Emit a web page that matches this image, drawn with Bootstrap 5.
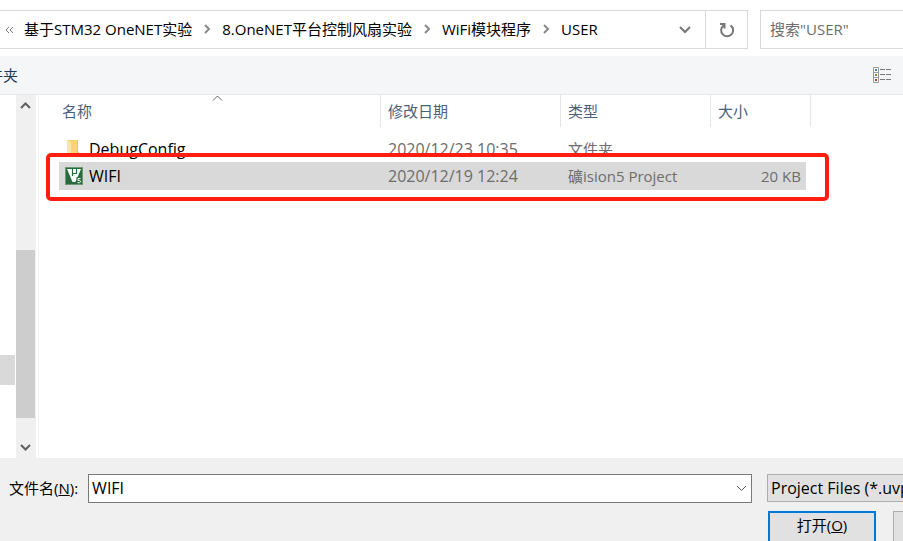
<!DOCTYPE html>
<html lang="zh-CN">
<head>
<meta charset="utf-8">
<meta name="viewport" content="width=device-width, initial-scale=1">
<title>打开</title>
<link href="https://cdn.jsdelivr.net/npm/bootstrap@5.3.0/dist/css/bootstrap.min.css" rel="stylesheet">
<style>
body{font-family:"Open Sans","Noto Sans CJK SC",sans-serif;font-size:15px;line-height:20px;color:#000;background:#fff}
button,input,select{font:inherit;color:inherit}
button{background:none;border:0;padding:0}
svg{display:block;flex:none}
.top-row{padding:10px 0 7px;gap:12px}
.address{height:39px;border:1px solid #d9d9d9;border-left:0;padding-left:5px}
.crumbs{gap:11px;padding:0 0 2px 10px}
.crumbs a{color:#000;text-decoration:none}
.drop-btn{width:40px}
.refresh-btn{width:42px;border-left:1px solid #d9d9d9}
.search-box{width:143px;height:39px;border:1px solid #d9d9d9;border-right:0;border-radius:0;padding:0 9px 2px;outline:0}
.search-box::placeholder{color:#6d6d6d}
.command-bar{height:39px;background:#f5f6f7;border-bottom:1px solid #e5e7ea;color:#1e395b;padding-right:12px}
.new-folder{margin-left:-12px}
.tree-pane{width:16px;padding:260px 1px 0 0}
.tree-item{height:30px;background:#d9d9d9}
.scroll-track{width:20px;background:#f0f0f0;padding:5px 0}
.scroll-thumb{height:168px;margin:140px 1px 0 0;background:#cdcdcd}
.files-pane{margin-left:2px;border-left:1px solid #f2f2f2;padding-left:20px}
.file-wrap{width:752px}
.file-table{width:100%;table-layout:fixed;border-collapse:separate;border-spacing:0}
.file-table th{height:32px;font-weight:400;color:#4c607a;border-right:1px solid #e5e5e5;padding:0 0 0 7px}
.file-table th:first-child{padding-left:3px}
.file-table td{height:26px;padding:0 0 0 7px;color:#6d6d6d;white-space:nowrap}
.file-table .picked td{height:28px}
.file-table td:first-child{padding-left:6px;color:#000}
.file-table .wide-text{font-size:16px}
.file-table .num-cell{padding-right:5px;text-align:right}
.file-table .row-gap td{height:9px}
.picked td:not(:last-child){background:#d9d9d9}
.picked .app-name{gap:6px}
.sort-mark{left:153px;top:0}
.red-frame{left:-13px;right:-18px;top:58px;height:48px;border:4px solid #ff1e10;border-radius:5px;pointer-events:none}
.dialog-foot{height:83px;background:#f0f0f0;padding:16px 0 0 9px;gap:8px}
.foot-label{padding:4px 2px 0 0}
.name-box{height:29px;border:1px solid #7a7a7a;background:#fff}
.name-box input{border:0;outline:0;padding:0 3px 1px;background:none;min-width:0;font-size:16px}
.name-box button{width:20px}
.foot-right{width:136px;margin-left:7px}
.type-pick{width:290px;height:28px;border:1px solid #adadad;border-radius:0;background:#e1e1e1;padding:0 3px;appearance:none;font-size:16px}
.foot-actions{width:250px;margin-top:9px;padding-left:1px;gap:17px}
.foot-actions button{width:108px;height:32px;background:#e1e1e1;border:1px solid #adadad;padding-bottom:4px}
.foot-actions .main-btn{border:2px solid #0078d7}
</style>
<script src="https://cdn.jsdelivr.net/npm/bootstrap@5.3.0/dist/js/bootstrap.bundle.min.js"></script>
</head>
<body>
<div class="d-flex flex-column vh-100 overflow-hidden">
  <header class="top-row d-flex">
    <div class="address d-flex align-items-stretch flex-grow-1">
      <svg class="align-self-center" width="9" height="8" viewBox="0 0 9 8" fill="none" stroke="#777"><path d="M4 1L1 4l3 3M8 1L5 4l3 3"/></svg>
      <nav class="crumbs d-flex align-items-center flex-grow-1 text-nowrap" aria-label="路径">
        <a href="#">基于STM32 OneNET实验</a>
        <svg width="8" height="10" viewBox="0 0 8 10" fill="none" stroke="#888" stroke-width="2"><path d="M2 1l4 4-4 4"/></svg>
        <a href="#">8.OneNET平台控制风扇实验</a>
        <svg width="8" height="10" viewBox="0 0 8 10" fill="none" stroke="#888" stroke-width="2"><path d="M2 1l4 4-4 4"/></svg>
        <a href="#">WiFi模块程序</a>
        <svg width="8" height="10" viewBox="0 0 8 10" fill="none" stroke="#888" stroke-width="2"><path d="M2 1l4 4-4 4"/></svg>
        <a href="#">USER</a>
      </nav>
      <button class="drop-btn d-flex align-items-center justify-content-center" type="button" aria-label="历史记录">
        <svg width="12" height="8" viewBox="0 0 12 8" fill="none" stroke="#777" stroke-width="2"><path d="M1 1l5 5 5-5"/></svg>
      </button>
      <button class="refresh-btn d-flex align-items-center justify-content-center" type="button" aria-label="刷新">
        <svg width="16" height="16" viewBox="0 0 16 16" fill="none" stroke="#777" stroke-width="2"><path d="M4.500 3.500A6 6 0 1 0 11.500 3.300M1 2h4.500v4.500"/></svg>
      </button>
    </div>
    <input class="search-box" type="search" placeholder="搜索&quot;USER&quot;" aria-label="搜索">
  </header>
  <div class="command-bar d-flex align-items-center justify-content-between">
    <button class="new-folder" type="button">件夹</button>
    <button type="button" aria-label="更改视图">
      <svg width="18" height="16" viewBox="0 0 18 16"><path d="M.5.5h5v15h-5zM.5 5.500h5M.5 10.500h5" fill="#fff" stroke="#999"/><path d="M7 2.500h5m1 0h5M7 7.500h5m1 0h5M7 12.500h5m1 0h5" stroke="#777"/><path fill="#3a7fb5" d="M2 2h2v2H2z"/><path fill="#7a8a3a" d="M2 7h2v2H2z"/><path fill="#b03a20" d="M2 12h2v2H2z"/></svg>
    </button>
  </div>
  <main class="d-flex flex-grow-1 overflow-hidden">
    <div class="tree-pane flex-shrink-0"><div class="tree-item"></div></div>
    <div class="scroll-track d-flex flex-column flex-shrink-0">
      <svg class="ms-1" width="11" height="10" viewBox="0 0 11 10" fill="none" stroke="#606060" stroke-width="2"><path d="M1 8l4.500-4.500L10 8"/></svg>
      <div class="scroll-thumb"></div>
      <svg class="ms-1 mt-auto" width="11" height="10" viewBox="0 0 11 10" fill="none" stroke="#606060" stroke-width="2"><path d="M1 2l4.500 4.500L10 2"/></svg>
    </div>
    <div class="files-pane flex-grow-1">
      <div class="file-wrap position-relative">
        <table class="file-table">
          <colgroup><col><col style="width:180px"><col style="width:150px"><col style="width:95px"><col style="width:5px"></colgroup>
          <thead><tr><th>名称</th><th>修改日期</th><th>类型</th><th colspan="2">大小</th></tr></thead>
          <tbody>
            <tr class="row-gap"><td colspan="5"></td></tr>
            <tr>
              <td class="wide-text"><div class="d-flex align-items-center gap-2">
                <svg width="16" height="18" viewBox="0 0 16 18"><path fill="#f6d477" d="M2 0h11v11l1 2v4H2z"/><path fill="#fbe7a5" d="M2 0l4 2v16l-4-3z"/><path fill="#eec35c" d="M12 0h1v11l1 2v4h-2z"/></svg>
                <span>DebugConfig</span></div></td>
              <td class="wide-text">2020/12/23 10:35</td><td>文件夹</td><td></td><td></td>
            </tr>
            <tr class="picked">
              <td class="wide-text"><div class="app-name d-flex align-items-center">
                <svg width="18" height="18" viewBox="0 0 18 18"><rect width="18" height="18" rx="1.500" fill="#286b3c"/><path d="M.5.5h17v17H.5z" fill="none" stroke="#6a9a74"/><path fill="#fff" d="M2 2h14L10.500 15h-3z"/><path d="M7.500 2v7M7.500 6.500h4V2" fill="none" stroke="#286b3c" stroke-width="1.200"/><path fill="#286b3c" d="M11.500 10h5.500v7h-5.500z"/><path d="M15.500 11.500H13v2h1.500q1 0 1 1t-1 1.200H12.500" fill="none" stroke="#fff"/></svg>
                <span>WIFI</span></div></td>
              <td class="wide-text">2020/12/19 12:24</td><td>礦ision5 Project</td><td class="num-cell">20 KB</td><td></td>
            </tr>
          </tbody>
        </table>
        <svg class="sort-mark position-absolute" width="11" height="6" viewBox="0 0 11 6" fill="none" stroke="#666"><path d="M1 5.500L5.500 1 10 5.500"/></svg>
        <div class="red-frame position-absolute"></div>
      </div>
    </div>
  </main>
  <footer class="dialog-foot d-flex align-items-start flex-shrink-0 overflow-hidden">
    <label class="foot-label text-nowrap" for="fname">文件名(<u>N</u>):</label>
    <div class="name-box d-flex flex-grow-1">
      <input class="flex-grow-1" id="fname" type="text" value="WIFI">
      <button class="d-flex align-items-center justify-content-center" type="button" aria-label="展开">
        <svg width="11" height="7" viewBox="0 0 11 7" fill="none" stroke="#555"><path d="M1 1l4.500 4.500L10 1"/></svg>
      </button>
    </div>
    <div class="foot-right flex-shrink-0">
      <select class="type-pick" aria-label="文件类型"><option>Project Files (*.uvproj; *.uvprojx)</option></select>
      <div class="foot-actions d-flex">
        <button class="main-btn" type="button">打开(<u>O</u>)</button>
        <button type="button" aria-label="取消"></button>
      </div>
    </div>
  </footer>
</div>
</body>
</html>
